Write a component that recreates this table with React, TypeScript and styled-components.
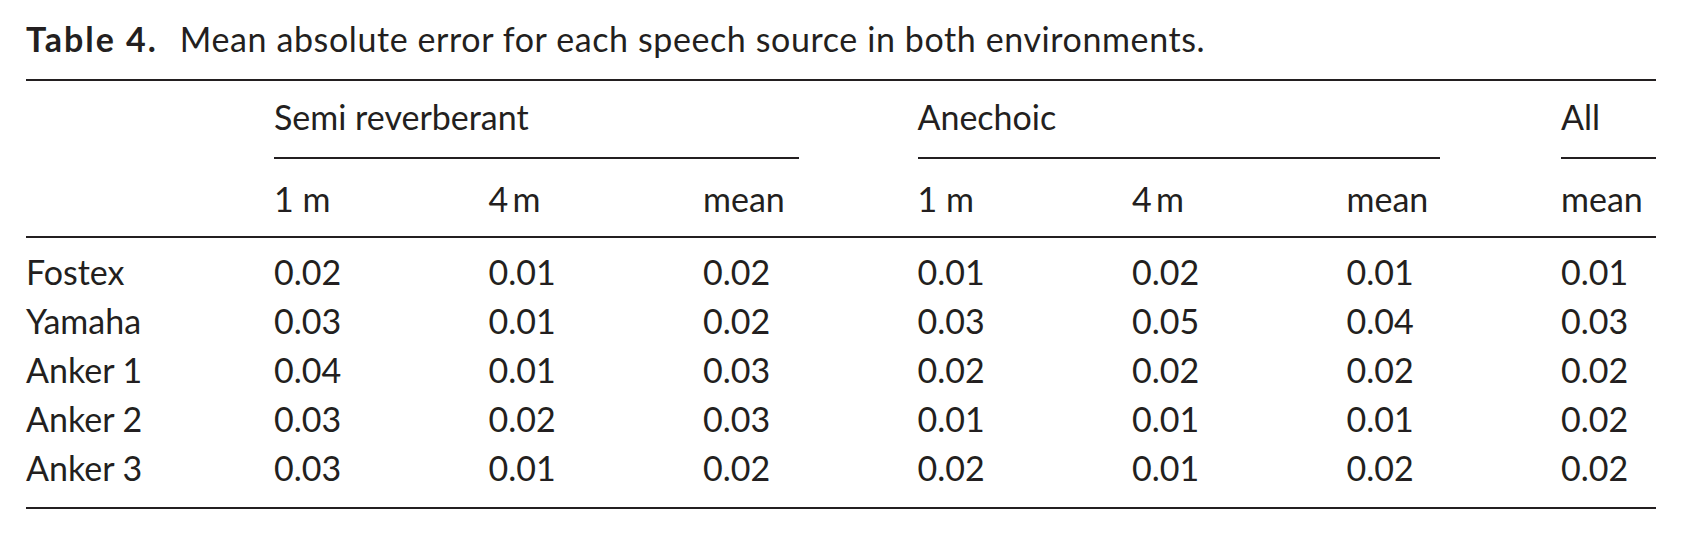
import styled, { createGlobalStyle } from "styled-components";

const GlobalStyle = createGlobalStyle`
  html, body {
    margin: 0;
    padding: 0;
    background: #ffffff;
  }
  body {
    font-family: Lato, "Open Sans", "Liberation Sans", sans-serif;
    color: #231f20;
  }
`;

const COLS = "248px repeat(6, 214.5px) 1fr";

const Page = styled.section`
  padding: 19px 26px 0 26px;
  width: 1630px;
`;

const Caption = styled.div`
  font-size: 34px;
  line-height: 40px;
  margin-bottom: 20px;
  white-space: nowrap;
  letter-spacing: 0.6px;
  b {
    font-weight: 700;
    letter-spacing: 2px;
    margin-right: 22px;
  }
`;

const Table = styled.div`
  border-top: 2px solid #231f20;
  border-bottom: 2px solid #231f20;
  font-size: 34px;
`;

const GroupRow = styled.div`
  display: grid;
  grid-template-columns: ${COLS};
  padding-top: 16px;
  line-height: 40px;
`;

const GroupCell = styled.div<{ $span: number; $trim: number }>`
  grid-column: span ${(p) => p.$span};
  margin-right: ${(p) => p.$trim}px;
  padding-bottom: 20px;
  border-bottom: 2px solid #231f20;
`;

const SubRow = styled.div`
  display: grid;
  grid-template-columns: ${COLS};
  padding: 20px 0 17px;
  line-height: 40px;
  border-bottom: 2px solid #231f20;
`;

const Body = styled.div`
  padding: 9px 0 15px;
`;

const Row = styled.div`
  display: grid;
  grid-template-columns: ${COLS};
  line-height: 49px;
`;

const Cell = styled.div`
  white-space: nowrap;
`;

const rows: [string, string[]][] = [
  ["Fostex", ["0.02", "0.01", "0.02", "0.01", "0.02", "0.01", "0.01"]],
  ["Yamaha", ["0.03", "0.01", "0.02", "0.03", "0.05", "0.04", "0.03"]],
  ["Anker 1", ["0.04", "0.01", "0.03", "0.02", "0.02", "0.02", "0.02"]],
  ["Anker 2", ["0.03", "0.02", "0.03", "0.01", "0.01", "0.01", "0.02"]],
  ["Anker 3", ["0.03", "0.01", "0.02", "0.02", "0.01", "0.02", "0.02"]],
];

const subHeads = ["1 m", "4\u2009m", "mean", "1 m", "4\u2009m", "mean", "mean"];

export default function App() {
  return (
    <>
      <GlobalStyle />
      <Page>
        <Caption>
          <b>Table 4.</b>Mean absolute error for each speech source in both environments.
        </Caption>
        <Table>
          <GroupRow>
            <Cell />
            <GroupCell $span={3} $trim={119}>Semi reverberant</GroupCell>
            <GroupCell $span={3} $trim={121}>Anechoic</GroupCell>
            <GroupCell $span={1} $trim={0}>All</GroupCell>
          </GroupRow>
          <SubRow>
            <Cell />
            {subHeads.map((h, i) => (
              <Cell key={i}>{h}</Cell>
            ))}
          </SubRow>
          <Body>
            {rows.map(([name, vals]) => (
              <Row key={name}>
                <Cell>{name}</Cell>
                {vals.map((v, i) => (
                  <Cell key={i}>{v}</Cell>
                ))}
              </Row>
            ))}
          </Body>
        </Table>
      </Page>
    </>
  );
}
